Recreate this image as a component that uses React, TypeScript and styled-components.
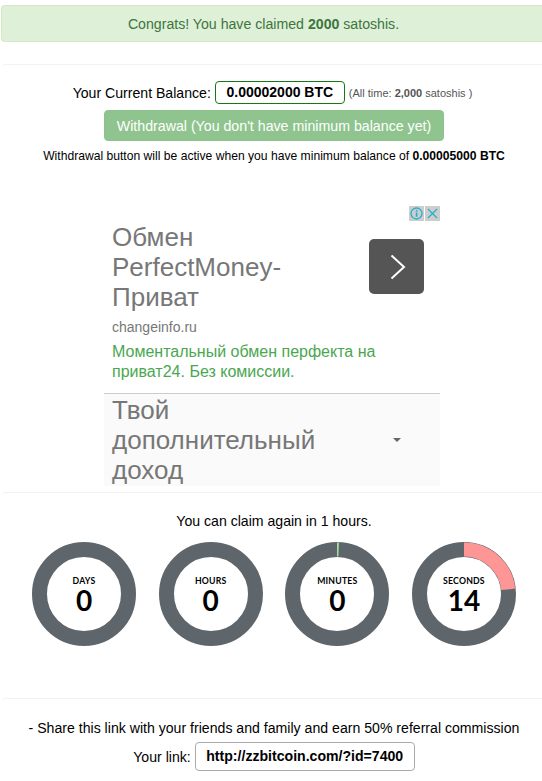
import React from "react";
import styled, { createGlobalStyle } from "styled-components";

const GlobalStyle = createGlobalStyle`
    html, body {
        margin: 0;
        padding: 0;
        background: #fff;
        overflow: hidden;
    }
    body {
        font-family: "Liberation Sans", Arial, sans-serif;
        color: #000;
    }
`;

const Page = styled.div`
    width: 542px;
    height: 781px;
    padding-top: 5px;
    box-sizing: border-box;
    overflow: hidden;
`;

const Alert = styled.div`
    margin-left: 1px;
    height: 37px;
    line-height: 37px;
    padding-right: 17px;
    background: #dff0d8;
    border: 1px solid #d6e9c6;
    border-right: 0;
    border-radius: 4px 0 0 4px;
    box-sizing: border-box;
    color: #3c763d;
    font-size: 14.15px;
    text-align: center;
`;

const Panel = styled.section<{ $top: number; $height: number }>`
    margin-top: ${(p) => p.$top}px;
    margin-left: 2px;
    padding-left: 4px;
    height: ${(p) => p.$height}px;
    border-top: 1px solid #f2f2f2;
    border-radius: 4px 0 0 0;
    box-sizing: border-box;
    text-align: center;
`;

const BalanceRow = styled.div`
    display: flex;
    justify-content: center;
    align-items: center;
    gap: 4px;
    margin-top: 16px;
    padding-right: 3px;
    font-size: 14.1px;
`;

const BalanceBox = styled.span`
    width: 130px;
    height: 23px;
    line-height: 21px;
    box-sizing: border-box;
    border: 1px solid #137a13;
    border-radius: 4px;
    font-weight: bold;
    font-size: 14px;
`;

const AllTime = styled.span`
    font-size: 11px;
    color: #555;
`;

const WithdrawButton = styled.button`
    display: block;
    width: 340px;
    height: 31px;
    margin: 6px auto 0;
    padding: 0;
    border: 1px solid #8dc28d;
    border-radius: 4px;
    background: #8fc48f;
    color: #fff;
    font-family: inherit;
    font-size: 14.2px;
`;

const Hint = styled.p`
    margin: 7px 0 0;
    font-size: 12.13px;
    line-height: 16px;
`;

const Ad = styled.div`
    position: relative;
    width: 336px;
    height: 280px;
    margin: 42px 0 0 98px;
    color: #777;
`;

const AdChoices = styled.div`
    position: absolute;
    top: 0;
    right: 0;
    display: flex;
    gap: 1px;
`;

const AdChoice = styled.span`
    width: 15px;
    height: 15px;
    background: #cdcdcd;
    display: flex;
    align-items: center;
    justify-content: center;
`;

const AdTop = styled.div`
    height: 187px;
    box-sizing: border-box;
    padding: 16px 16px 0 8px;
    text-align: left;
`;

const AdHead = styled.div`
    display: flex;
    justify-content: space-between;
    align-items: flex-start;
`;

const AdTitle = styled.div`
    width: 240px;
    font-size: 26px;
    line-height: 30px;
`;

const AdDomain = styled.div`
    font-size: 14px;
    line-height: 18px;
    margin-top: 6px;
`;

const AdText = styled.div`
    font-size: 16px;
    line-height: 20px;
    color: #4aa74f;
    margin-top: 6px;
`;

const AdArrow = styled.div`
    width: 55px;
    height: 55px;
    margin-top: 17px;
    padding-left: 2px;
    box-sizing: border-box;
    background: #555;
    border-radius: 5px;
    display: flex;
    align-items: center;
    justify-content: center;
`;

const AdBottom = styled.div`
    height: 93px;
    box-sizing: border-box;
    border-top: 1px solid #ccc;
    background: #fafafa;
    padding: 0 16px 0 8px;
    display: flex;
    justify-content: space-between;
    align-items: center;
    text-align: left;
`;

const Caret = styled.span`
    width: 0;
    height: 0;
    margin-right: 23px;
    border-left: 4px solid transparent;
    border-right: 4px solid transparent;
    border-top: 4px solid #666;
`;

const ClaimText = styled.p`
    margin: 20px 0 0;
    font-size: 14.1px;
    line-height: 17px;
`;

const Rings = styled.div`
    display: flex;
    gap: 22.67px;
    margin: 12px 0 0 26px;
`;

const Ring = styled.div`
    position: relative;
    width: 104px;
    height: 104px;
`;

const RingLabel = styled.div`
    position: absolute;
    inset: 0;
    display: flex;
    flex-direction: column;
    align-items: center;
    justify-content: center;
    font-family: Lato, sans-serif;
`;

const Unit = styled.span`
    font-size: 8.7px;
    font-weight: 700;
    line-height: 11px;
    letter-spacing: 0.2px;
`;

const Count = styled.span`
    font-size: 28px;
    font-weight: 700;
    line-height: 28px;
`;

const ShareText = styled.p`
    margin: 21px 0 0;
    font-size: 14.12px;
    line-height: 17px;
`;

const LinkRow = styled.div`
    display: flex;
    justify-content: center;
    align-items: center;
    gap: 4px;
    margin-top: 5px;
    font-size: 14.1px;
`;

const LinkBox = styled.span`
    width: 220px;
    height: 29px;
    line-height: 27px;
    box-sizing: border-box;
    border: 1px solid #aaa;
    border-radius: 4px;
    font-weight: bold;
`;

// arc from 12 o'clock, clockwise, as a filled wedge of the ring
const arcPath = (fraction: number) => {
    const a = fraction * 2 * Math.PI;
    const r = 44.5;
    const x = 52 + r * Math.sin(a);
    const y = 52 - r * Math.cos(a);
    return `M52 7.5 A${r} ${r} 0 ${fraction > 0.5 ? 1 : 0} 1 ${x} ${y}`;
};

const counters = [
    { unit: "DAYS", value: 0, fraction: 0, color: "" },
    { unit: "HOURS", value: 0, fraction: 0, color: "" },
    { unit: "MINUTES", value: 0, fraction: 0.006, color: "#a5dba5" },
    { unit: "SECONDS", value: 14, fraction: 14 / 60, color: "#ff9696" },
];

export default function App() {
    return (
        <Page>
            <GlobalStyle />
            <Alert>
                Congrats! You have claimed <b>2000</b> satoshis.
            </Alert>

            <Panel $top={22} $height={428}>
                <BalanceRow>
                    <span>Your Current Balance:</span>
                    <BalanceBox>0.00002000 BTC</BalanceBox>
                    <AllTime>
                        (All time: <b>2,000</b> satoshis )
                    </AllTime>
                </BalanceRow>
                <WithdrawButton disabled>Withdrawal (You don't have minimum balance yet)</WithdrawButton>
                <Hint>
                    Withdrawal button will be active when you have minimum balance of <b>0.00005000 BTC</b>
                </Hint>
                <Ad>
                    <AdChoices>
                        <AdChoice>
                            <svg width="13" height="13" viewBox="0 0 13 13">
                                <circle cx="6.5" cy="6.5" r="5.5" fill="none" stroke="#1fb0d0" strokeWidth="1.3" />
                                <rect x="5.8" y="5.5" width="1.6" height="4.2" fill="#1fb0d0" />
                                <rect x="5.8" y="3" width="1.6" height="1.6" fill="#1fb0d0" />
                            </svg>
                        </AdChoice>
                        <AdChoice>
                            <svg width="13" height="13" viewBox="0 0 13 13">
                                <path d="M2 2 L11 11 M11 2 L2 11" stroke="#1fb0d0" strokeWidth="1.2" />
                            </svg>
                        </AdChoice>
                    </AdChoices>
                    <AdTop>
                        <AdHead>
                            <AdTitle>Обмен PerfectMoney-Приват</AdTitle>
                            <AdArrow>
                                <svg width="16" height="26" viewBox="0 0 16 26">
                                    <path d="M1.5 1.5 L14 13 L1.5 24.5" fill="none" stroke="#fff" strokeWidth="2" />
                                </svg>
                            </AdArrow>
                        </AdHead>
                        <AdDomain>changeinfo.ru</AdDomain>
                        <AdText>Моментальный обмен перфекта на приват24. Без комиссии.</AdText>
                    </AdTop>
                    <AdBottom>
                        <AdTitle>Твой дополнительный доход</AdTitle>
                        <Caret />
                    </AdBottom>
                </Ad>
            </Panel>

            <Panel $top={0} $height={206}>
                <ClaimText>You can claim again in 1 hours.</ClaimText>
                <Rings>
                    {counters.map((c) => (
                        <Ring key={c.unit}>
                            <svg width="104" height="104" viewBox="0 0 104 104">
                                <circle cx="52" cy="52" r="44.5" fill="none" stroke="#5f666b" strokeWidth="15" />
                                {c.fraction > 0 && (
                                    <path d={arcPath(c.fraction)} fill="none" stroke={c.color} strokeWidth="14" />
                                )}
                            </svg>
                            <RingLabel>
                                <Unit>{c.unit}</Unit>
                                <Count>{c.value}</Count>
                            </RingLabel>
                        </Ring>
                    ))}
                </Rings>
            </Panel>

            <Panel $top={0} $height={83}>
                <ShareText>- Share this link with your friends and family and earn 50% referral commission</ShareText>
                <LinkRow>
                    <span>Your link:</span>
                    <LinkBox>http://zzbitcoin.com/?id=7400</LinkBox>
                </LinkRow>
            </Panel>
        </Page>
    );
}
